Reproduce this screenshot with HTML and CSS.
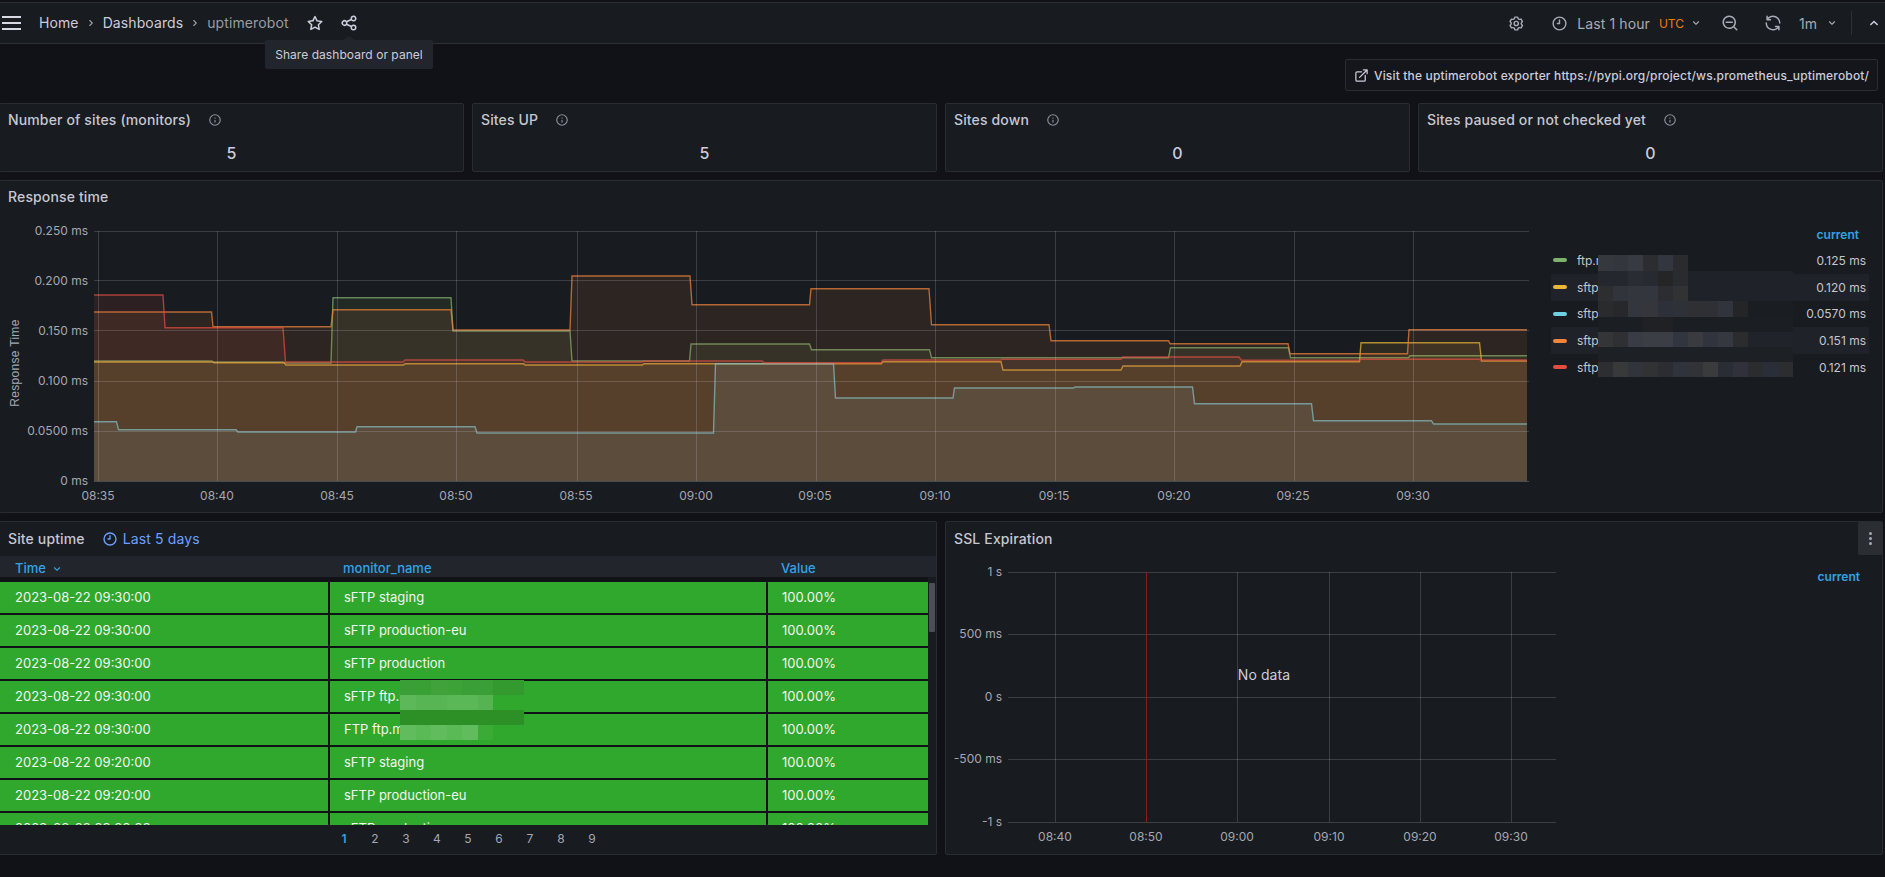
FILE: index.html
```html
<!DOCTYPE html>
<html lang="en">
<head>
<meta charset="utf-8">
<title>uptimerobot - Dashboards</title>
<link rel="stylesheet" href="styles.css">
</head>
<body>
<svg class="sprite" width="0" height="0" aria-hidden="true">
  <symbol id="i-star" viewBox="0 0 24 24"><path d="M22,9.67A1,1,0,0,0,21.14,9l-5.69-.83L12.9,3a1,1,0,0,0-1.8,0L8.55,8.16,2.86,9a1,1,0,0,0-.81.68,1,1,0,0,0,.25,1L6.43,14.7l-1,5.68A1,1,0,0,0,6.9,21.44L12,18.77l5.1,2.67a.93.93,0,0,0,.46.12,1,1,0,0,0,.59-.19,1,1,0,0,0,.4-1l-1-5.68,4.13-4A1,1,0,0,0,22,9.67Zm-6.15,4a1,1,0,0,0-.29.88l.72,4.2-3.76-2a1.06,1.06,0,0,0-.94,0l-3.76,2,.72-4.2a1,1,0,0,0-.29-.88l-3-3,4.21-.61a1,1,0,0,0,.76-.55L12,5.7l1.88,3.82a1,1,0,0,0,.76.55l4.21.61Z"/></symbol>
  <symbol id="i-share" viewBox="0 0 24 24"><path d="M18,14a4,4,0,0,0-3.08,1.48l-5.1-2.35a3.64,3.64,0,0,0,0-2.26l5.1-2.35A4,4,0,1,0,14,6a4.17,4.17,0,0,0,.07.71L8.79,9.14a4,4,0,1,0,0,5.72l5.28,2.43A4.17,4.17,0,0,0,14,18a4,4,0,1,0,4-4ZM18,4a2,2,0,1,1-2,2A2,2,0,0,1,18,4ZM6,14a2,2,0,1,1,2-2A2,2,0,0,1,6,14Zm12,6a2,2,0,1,1,2-2A2,2,0,0,1,18,20Z"/></symbol>
  <symbol id="i-clock" viewBox="0 0 24 24"><path d="M12,2A10,10,0,1,0,22,12,10,10,0,0,0,12,2Zm0,18a8,8,0,1,1,8-8A8,8,0,0,1,12,20ZM12,6a1,1,0,0,0-1,1v4H9a1,1,0,0,0,0,2h3a1,1,0,0,0,1-1V7A1,1,0,0,0,12,6Z"/></symbol>
  <symbol id="i-info" viewBox="0 0 24 24"><path d="M12,2A10,10,0,1,0,22,12,10,10,0,0,0,12,2Zm0,18a8,8,0,1,1,8-8A8,8,0,0,1,12,20Zm0-8.5a1,1,0,0,0-1,1v3a1,1,0,0,0,2,0v-3A1,1,0,0,0,12,11.5Zm0-4a1.25,1.25,0,1,0,1.25,1.25A1.25,1.25,0,0,0,12,7.5Z"/></symbol>
  <symbol id="i-cog" viewBox="0 0 24 24"><path d="M19.9,12.66a1,1,0,0,1,0-1.32L21.18,9.9a1,1,0,0,0,.12-1.17l-2-3.46a1,1,0,0,0-1.07-.48l-1.88.38a1,1,0,0,1-1.15-.66l-.61-1.83A1,1,0,0,0,13.64,2h-4a1,1,0,0,0-1,.68L8.08,4.51a1,1,0,0,1-1.15.66L5,4.79A1,1,0,0,0,4,5.27L2,8.73A1,1,0,0,0,2.1,9.9l1.27,1.44a1,1,0,0,1,0,1.32L2.1,14.1A1,1,0,0,0,2,15.27l2,3.46a1,1,0,0,0,1.07.48l1.88-.38a1,1,0,0,1,1.15.66l.61,1.83a1,1,0,0,0,1,.68h4a1,1,0,0,0,.95-.68l.61-1.83a1,1,0,0,1,1.15-.66l1.88.38a1,1,0,0,0,1.07-.48l2-3.46a1,1,0,0,0-.12-1.17ZM18.41,14l.8.9-1.28,2.22-1.18-.24a3,3,0,0,0-3.45,2L12.92,20H10.36L10,18.86a3,3,0,0,0-3.45-2l-1.18.24L4.07,14.89l.8-.9a3,3,0,0,0,0-4l-.8-.9L5.35,6.89l1.18.24a3,3,0,0,0,3.45-2L10.36,4h2.56l.38,1.14a3,3,0,0,0,3.45,2l1.18-.24,1.28,2.22-.8.9A3,3,0,0,0,18.41,14ZM11.64,8a4,4,0,1,0,4,4A4,4,0,0,0,11.64,8Zm0,6a2,2,0,1,1,2-2A2,2,0,0,1,11.64,14Z"/></symbol>
  <symbol id="i-zoom" viewBox="0 0 24 24"><path d="M21.71,20.29,18,16.61A9,9,0,1,0,16.61,18l3.68,3.68a1,1,0,0,0,1.42,0A1,1,0,0,0,21.71,20.29ZM11,18a7,7,0,1,1,7-7A7,7,0,0,1,11,18Zm4-8H7a1,1,0,0,0,0,2h8a1,1,0,0,0,0-2Z"/></symbol>
  <symbol id="i-sync" viewBox="0 0 24 24"><path d="M19.91,15.51H15.38a1,1,0,0,0,0,2h2.4A8,8,0,0,1,4,12a1,1,0,0,0-2,0,10,10,0,0,0,16.88,7.23V21a1,1,0,0,0,2,0V16.5A1,1,0,0,0,19.91,15.51ZM12,2A10,10,0,0,0,5.12,4.77V3a1,1,0,0,0-2,0V7.5a1,1,0,0,0,1,1h4.5a1,1,0,0,0,0-2H6.22A8,8,0,0,1,20,12a1,1,0,0,0,2,0A10,10,0,0,0,12,2Z"/></symbol>
  <symbol id="i-ext" viewBox="0 0 24 24"><path d="M18,10.82a1,1,0,0,0-1,1V19a1,1,0,0,1-1,1H5a1,1,0,0,1-1-1V8A1,1,0,0,1,5,7h7.18a1,1,0,0,0,0-2H5A3,3,0,0,0,2,8V19a3,3,0,0,0,3,3H16a3,3,0,0,0,3-3V11.82A1,1,0,0,0,18,10.82Zm3.92-8.2a1,1,0,0,0-.54-.54A1,1,0,0,0,21,2H15a1,1,0,0,0,0,2h3.59L8.29,14.29a1,1,0,0,0,0,1.42,1,1,0,0,0,1.42,0L20,5.41V9a1,1,0,0,0,2,0V3A1,1,0,0,0,21.92,2.62Z"/></symbol>
  <symbol id="i-down" viewBox="0 0 24 24"><path d="M17,9.17a1,1,0,0,0-1.41,0L12,12.71,8.46,9.17a1,1,0,0,0-1.41,0,1,1,0,0,0,0,1.42l4.24,4.24a1,1,0,0,0,1.42,0L17,10.59A1,1,0,0,0,17,9.17Z"/></symbol>
  <symbol id="i-up" viewBox="0 0 24 24"><path d="M17,13.41,12.71,9.17a1,1,0,0,0-1.42,0L7.05,13.41a1,1,0,0,0,0,1.42,1,1,0,0,0,1.41,0L12,11.29l3.54,3.54a1,1,0,0,0,.7.29,1,1,0,0,0,.71-.29A1,1,0,0,0,17,13.41Z"/></symbol>
  <symbol id="i-right" viewBox="0 0 24 24"><path d="M14.83,11.29,10.59,7.05a1,1,0,0,0-1.42,0,1,1,0,0,0,0,1.41L12.71,12,9.17,15.54a1,1,0,0,0,0,1.41,1,1,0,0,0,.71.29,1,1,0,0,0,.71-.29l4.24-4.24A1,1,0,0,0,14.83,11.29Z"/></symbol>
</svg>

<header class="topbar">
  <nav class="crumbs">
    <span class="burger"><i></i><i></i><i></i></span>
    <a class="crumb home">Home</a>
    <svg class="ic sep"><use href="#i-right"/></svg>
    <a class="crumb">Dashboards</a>
    <svg class="ic sep"><use href="#i-right"/></svg>
    <span class="crumb current-page">uptimerobot</span>
    <svg class="ic star"><use href="#i-star"/></svg>
    <svg class="ic share"><use href="#i-share"/></svg>
  </nav>
  <div class="tools">
    <svg class="ic cog"><use href="#i-cog"/></svg>
    <svg class="ic clock"><use href="#i-clock"/></svg>
    <span class="range">Last 1 hour</span>
    <span class="utc">UTC</span>
    <svg class="ic chev"><use href="#i-down"/></svg>
    <svg class="ic zoomout"><use href="#i-zoom"/></svg>
    <svg class="ic sync"><use href="#i-sync"/></svg>
    <span class="interval">1m</span>
    <svg class="ic chev chev-2"><use href="#i-down"/></svg>
    <span class="divider"></span>
    <svg class="ic chev-up"><use href="#i-up"/></svg>
  </div>
  <div class="tooltip">Share dashboard or panel</div>
</header>

<main class="dash">
  <div class="link-row">
    <a class="link-btn"><svg class="ic ext"><use href="#i-ext"/></svg>Visit the uptimerobot exporter https://pypi.org/project/ws.prometheus_uptimerobot/</a>
  </div>

  <section class="stats">
    <article class="panel stat">
      <h2 class="title">Number of sites (monitors)<svg class="ic info"><use href="#i-info"/></svg></h2>
      <p class="value">5</p>
    </article>
    <article class="panel stat">
      <h2 class="title">Sites UP<svg class="ic info"><use href="#i-info"/></svg></h2>
      <p class="value">5</p>
    </article>
    <article class="panel stat">
      <h2 class="title">Sites down<svg class="ic info"><use href="#i-info"/></svg></h2>
      <p class="value">0</p>
    </article>
    <article class="panel stat">
      <h2 class="title">Sites paused or not checked yet<svg class="ic info"><use href="#i-info"/></svg></h2>
      <p class="value">0</p>
    </article>
  </section>

  <article class="panel response">
    <h2 class="title title-chart">Response time</h2>
    <div class="chart-row">
      <svg class="plot plot-response" viewBox="0 210 1544 300" width="1544" height="300">
        <g class="series">
          <path class="fill green" d="M94,360 H212 L213,361 H283 L285,362 H331 L333,296.7 H451 L453,330 H570 L572,360 H689.5 L691,343 H809.5 L811.5,348.7 H929.5 L931.5,356.7 H1168.5 L1170.5,346.7 H1288.5 L1290.5,356.7 H1408.5 L1410,354.7 H1527 V480 H94 Z"/>
          <path class="line green" d="M94,360 H212 L213,361 H283 L285,362 H331 L333,296.7 H451 L453,330 H570 L572,360 H689.5 L691,343 H809.5 L811.5,348.7 H929.5 L931.5,356.7 H1168.5 L1170.5,346.7 H1288.5 L1290.5,356.7 H1408.5 L1410,354.7 H1527"/>
          <path class="fill yellow" d="M94,361 H212.5 L214,361.7 H284 L286,364 H403.5 L405,362.7 H523.5 L525,364 H642.5 L644,362.7 H881.5 L883,360.7 H1001 L1003,369 H1121 L1123,365 H1240 L1242,360.7 H1359.5 L1361,341.7 H1479.5 L1481.5,360 H1527 V480 H94 Z"/>
          <path class="line yellow" d="M94,361 H212.5 L214,361.7 H284 L286,364 H403.5 L405,362.7 H523.5 L525,364 H642.5 L644,362.7 H881.5 L883,360.7 H1001 L1003,369 H1121 L1123,365 H1240 L1242,360.7 H1359.5 L1361,341.7 H1479.5 L1481.5,360 H1527"/>
          <path class="fill cyan" d="M94,420.7 H116.5 L118.5,428.7 H236 L238,431 H355.5 L357,425.7 H475 L477,432 H713.5 L715.5,362.7 H833.5 L835.5,397 H953 L954.5,387 H1073.5 L1075,386 H1192.5 L1194.5,402.7 H1311.5 L1313.5,419.7 H1431.5 L1433.5,423 H1527 V480 H94 Z"/>
          <path class="line cyan" d="M94,420.7 H116.5 L118.5,428.7 H236 L238,431 H355.5 L357,425.7 H475 L477,432 H713.5 L715.5,362.7 H833.5 L835.5,397 H953 L954.5,387 H1073.5 L1075,386 H1192.5 L1194.5,402.7 H1311.5 L1313.5,419.7 H1431.5 L1433.5,423 H1527"/>
          <path class="fill orange" d="M94,311 H211.5 L213,325.7 H331 L333,308.7 H451 L453,329 H570 L572,275 H690 L692,303.7 H809.5 L811,287.7 H929 L931.5,323.7 H1049 L1051,339.7 H1168.5 L1170,342.7 H1288 L1290,352.7 H1407.5 L1409,328.7 H1527 V480 H94 Z"/>
          <path class="line orange" d="M94,311 H211.5 L213,325.7 H331 L333,308.7 H451 L453,329 H570 L572,275 H690 L692,303.7 H809.5 L811,287.7 H929 L931.5,323.7 H1049 L1051,339.7 H1168.5 L1170,342.7 H1288 L1290,352.7 H1407.5 L1409,328.7 H1527"/>
          <path class="fill red" d="M94,294 H163 L165,326.7 H283 L285.5,361 H403 L405,359 H523 L525,361 H642 L644,360 H762 L764,361.7 H881 L883,359 H1000.5 L1002.5,358.3 H1121 L1122.5,356 H1239 L1241.5,359.3 H1359 L1361,358.3 H1479 L1481,359 H1527 V480 H94 Z"/>
          <path class="line red" d="M94,294 H163 L165,326.7 H283 L285.5,361 H403 L405,359 H523 L525,361 H642 L644,360 H762 L764,361.7 H881 L883,359 H1000.5 L1002.5,358.3 H1121 L1122.5,356 H1239 L1241.5,359.3 H1359 L1361,358.3 H1479 L1481,359 H1527"/>
        </g>
        <g class="grid">
          <path d="M94,230.5H1529M94,279.5H1529M94,329.5H1529M94,380.5H1529M94,430.5H1529"/>
          <path d="M98.5,230V480M217.5,230V480M337.5,230V480M456.5,230V480M577.5,230V480M696.5,230V480M816.5,230V480M935.5,230V480M1055.5,230V480M1174.5,230V480M1294.5,230V480M1413.5,230V480"/>
          <path class="axis" d="M94,480.5H1529"/>
        </g>
        <g class="ticks ticks-y">
          <text x="88" y="234">0.250 ms</text>
          <text x="88" y="284">0.200 ms</text>
          <text x="88" y="334">0.150 ms</text>
          <text x="88" y="384">0.100 ms</text>
          <text x="88" y="434">0.0500 ms</text>
          <text x="88" y="484">0 ms</text>
        </g>
        <g class="ticks ticks-x">
          <text x="98" y="499">08:35</text>
          <text x="217" y="499">08:40</text>
          <text x="337" y="499">08:45</text>
          <text x="456" y="499">08:50</text>
          <text x="576" y="499">08:55</text>
          <text x="696" y="499">09:00</text>
          <text x="815" y="499">09:05</text>
          <text x="935" y="499">09:10</text>
          <text x="1054" y="499">09:15</text>
          <text x="1174" y="499">09:20</text>
          <text x="1293" y="499">09:25</text>
          <text x="1413" y="499">09:30</text>
        </g>
        <text class="axis-label" transform="translate(19 362) rotate(-90)">Response Time</text>
      </svg>
      <div class="legend">
        <div class="legend-head">current</div>
        <div class="legend-row"><i class="sw sw-green"></i><span class="lname">ftp.m</span><span class="lval">0.125 ms</span></div>
        <div class="legend-row alt"><i class="sw sw-yellow"></i><span class="lname">sftp.m</span><span class="lval">0.120 ms</span></div>
        <div class="legend-row"><i class="sw sw-cyan"></i><span class="lname">sftp.m</span><span class="lval">0.0570 ms</span></div>
        <div class="legend-row alt"><i class="sw sw-orange"></i><span class="lname">sftp.m</span><span class="lval">0.151 ms</span></div>
        <div class="legend-row"><i class="sw sw-red"></i><span class="lname">sftp.m</span><span class="lval">0.121 ms</span></div>
        <svg class="mask mask-legend" width="195" height="122" viewBox="0 0 195 122" shape-rendering="crispEdges">
          <g>
            <rect x="0" y="0" width="15" height="16" fill="#35383c"/><rect x="15" y="0" width="15" height="16" fill="#33363d"/><rect x="30" y="0" width="15" height="16" fill="#373a40"/><rect x="45" y="0" width="15" height="16" fill="#2c2d30"/><rect x="60" y="0" width="15" height="16" fill="#33363f"/><rect x="75" y="0" width="15" height="16" fill="#2a2b2e"/>
            <rect x="0" y="16" width="195" height="15" fill="#1f2229"/><rect x="0" y="16" width="30" height="15" fill="#24272e"/><rect x="30" y="16" width="15" height="15" fill="#2a2c34"/><rect x="45" y="16" width="15" height="15" fill="#272a30"/><rect x="60" y="16" width="15" height="15" fill="#252527"/><rect x="75" y="16" width="15" height="15" fill="#2a2b2e"/>
            <rect x="0" y="31" width="195" height="15" fill="#1f2229"/><rect x="0" y="31" width="15" height="15" fill="#2d2e30"/><rect x="15" y="31" width="15" height="15" fill="#31343b"/><rect x="30" y="31" width="30" height="15" fill="#33363d"/><rect x="60" y="31" width="15" height="15" fill="#2b2d33"/><rect x="75" y="31" width="15" height="15" fill="#313233"/>
            <rect x="0" y="46" width="195" height="16" fill="#1a1d21"/><rect x="0" y="46" width="15" height="16" fill="#2a2b2d"/><rect x="15" y="46" width="15" height="16" fill="#26282c"/><rect x="30" y="46" width="15" height="16" fill="#33363c"/><rect x="45" y="46" width="15" height="16" fill="#35363b"/><rect x="60" y="46" width="15" height="16" fill="#2d3038"/><rect x="75" y="46" width="15" height="16" fill="#2e3138"/><rect x="90" y="46" width="15" height="16" fill="#2f3034"/><rect x="105" y="46" width="15" height="16" fill="#2e3035"/><rect x="120" y="46" width="15" height="16" fill="#31343b"/><rect x="135" y="46" width="15" height="16" fill="#232527"/>
            <rect x="0" y="62" width="195" height="15" fill="#1b1e22"/><rect x="45" y="62" width="30" height="15" fill="#1f2124"/>
            <rect x="0" y="77" width="195" height="15" fill="#20232a"/><rect x="0" y="77" width="15" height="15" fill="#343537"/><rect x="15" y="77" width="15" height="15" fill="#2e3034"/><rect x="30" y="77" width="15" height="15" fill="#3a3c45"/><rect x="45" y="77" width="30" height="15" fill="#3c3e46"/><rect x="75" y="77" width="15" height="15" fill="#31353f"/><rect x="90" y="77" width="15" height="15" fill="#3a3b3e"/><rect x="105" y="77" width="15" height="15" fill="#31343d"/><rect x="120" y="77" width="15" height="15" fill="#35383e"/><rect x="135" y="77" width="15" height="15" fill="#2b2c2e"/>
            <rect x="0" y="92" width="195" height="15" fill="#1d2024"/>
            <rect x="0" y="107" width="15" height="15" fill="#2d2e31"/><rect x="15" y="107" width="15" height="15" fill="#38393b"/><rect x="30" y="107" width="15" height="15" fill="#31343a"/><rect x="45" y="107" width="15" height="15" fill="#313234"/><rect x="60" y="107" width="15" height="15" fill="#2b2d33"/><rect x="75" y="107" width="15" height="15" fill="#2f333c"/><rect x="90" y="107" width="15" height="15" fill="#323336"/><rect x="105" y="107" width="15" height="15" fill="#3a3b3d"/><rect x="120" y="107" width="15" height="15" fill="#2a2d35"/><rect x="135" y="107" width="15" height="15" fill="#30313a"/><rect x="150" y="107" width="15" height="15" fill="#2b2c2e"/><rect x="165" y="107" width="15" height="15" fill="#2a2e38"/><rect x="180" y="107" width="15" height="15" fill="#2c2d2f"/>
          </g>
        </svg>
      </div>
    </div>
  </article>

  <section class="bottom">
    <article class="panel uptime">
      <h2 class="title title-bottom">Site uptime<span class="override"><svg class="ic override-ic"><use href="#i-clock"/></svg>Last 5 days</span></h2>
      <div class="thead">
        <span class="th th-time">Time<svg class="ic th-chev"><use href="#i-down"/></svg></span>
        <span class="th">monitor_name</span>
        <span class="th">Value</span>
      </div>
      <div class="tbody-wrap">
        <div class="tbody">
          <div class="cell">2023-08-22 09:30:00</div><div class="cell">sFTP staging</div><div class="cell">100.00%</div>
          <div class="cell">2023-08-22 09:30:00</div><div class="cell">sFTP production-eu</div><div class="cell">100.00%</div>
          <div class="cell">2023-08-22 09:30:00</div><div class="cell">sFTP production</div><div class="cell">100.00%</div>
          <div class="cell">2023-08-22 09:30:00</div><div class="cell">sFTP ftp.m</div><div class="cell">100.00%</div>
          <div class="cell">2023-08-22 09:30:00</div><div class="cell">FTP ftp.m</div><div class="cell">100.00%</div>
          <div class="cell">2023-08-22 09:20:00</div><div class="cell">sFTP staging</div><div class="cell">100.00%</div>
          <div class="cell">2023-08-22 09:20:00</div><div class="cell">sFTP production-eu</div><div class="cell">100.00%</div>
          <div class="cell cell-cut">2023-08-22 09:20:00</div><div class="cell cell-cut">sFTP production</div><div class="cell cell-cut">100.00%</div>
        </div>
        <svg class="mask mask-table" width="124" height="60" viewBox="0 0 124 60" shape-rendering="crispEdges">
          <rect x="0" y="0" width="16" height="15" fill="#3a9f36"/><rect x="16" y="0" width="15" height="15" fill="#38a034"/><rect x="31" y="0" width="16" height="15" fill="#3fa23b"/><rect x="47" y="0" width="15" height="15" fill="#3da339"/><rect x="62" y="0" width="31" height="15" fill="#3b9f37"/><rect x="93" y="0" width="31" height="15" fill="#329a2e"/>
          <rect x="0" y="15" width="124" height="15" fill="#30a82d"/><rect x="0" y="15" width="16" height="15" fill="#5db859"/><rect x="16" y="15" width="31" height="15" fill="#57b553"/><rect x="47" y="15" width="31" height="15" fill="#5bb857"/><rect x="78" y="15" width="15" height="15" fill="#55b451"/>
          <rect x="0" y="30" width="124" height="15" fill="#2c9027"/>
          <rect x="0" y="45" width="124" height="15" fill="#30a82d"/><rect x="0" y="45" width="16" height="15" fill="#60bc5c"/><rect x="16" y="45" width="15" height="15" fill="#5aba56"/><rect x="31" y="45" width="16" height="15" fill="#60bc5c"/><rect x="47" y="45" width="15" height="15" fill="#5aba56"/><rect x="62" y="45" width="16" height="15" fill="#60bc5c"/><rect x="78" y="45" width="15" height="15" fill="#3aab36"/>
        </svg>
        <span class="scrollthumb"></span>
      </div>
      <div class="pager">
        <span class="page on">1</span><span class="page">2</span><span class="page">3</span><span class="page">4</span><span class="page">5</span><span class="page">6</span><span class="page">7</span><span class="page">8</span><span class="page">9</span>
      </div>
    </article>

    <article class="panel ssl">
      <h2 class="title title-bottom">SSL Expiration</h2>
      <span class="panel-menu"><i></i><i></i><i></i></span>
      <div class="chart-row">
        <svg class="plot" viewBox="946 555 620 298" width="620" height="298">
          <g class="grid">
            <path d="M1008,572.5H1556M1008,634.5H1556M1008,697.5H1556M1008,759.5H1556M1008,822.5H1556"/>
            <path d="M1055.5,572V822M1237.5,572V822M1329.5,572V822M1420.5,572V822M1511.5,572V822"/>
            <path class="marker" d="M1146.5,572V822"/>
          </g>
          <g class="ticks ticks-y">
            <text x="1002" y="576">1 s</text>
            <text x="1002" y="638">500 ms</text>
            <text x="1002" y="701">0 s</text>
            <text x="1002" y="763">-500 ms</text>
            <text x="1002" y="826">-1 s</text>
          </g>
          <g class="ticks ticks-x">
            <text x="1055" y="841">08:40</text>
            <text x="1146" y="841">08:50</text>
            <text x="1237" y="841">09:00</text>
            <text x="1329" y="841">09:10</text>
            <text x="1420" y="841">09:20</text>
            <text x="1511" y="841">09:30</text>
          </g>
          <text class="nodata" x="1264" y="680">No data</text>
        </svg>
        <div class="legend legend-empty"><div class="legend-head">current</div></div>
      </div>
    </article>
  </section>
</main>
</body>
</html>
```

FILE: styles.css
```css
* { box-sizing: border-box; }
html, body { margin: 0; padding: 0; height: 100%; }
body {
  background: #111217;
  color: #ccccdc;
  font-family: Inter, "Noto Sans", "Liberation Sans", sans-serif;
  font-size: 14px;
  overflow: hidden;
}
.sprite { position: absolute; }
.ic { fill: currentColor; display: block; flex: none; width: 16px; height: 16px; }

/* top bar */
.topbar {
  position: relative;
  display: flex;
  justify-content: space-between;
  align-items: center;
  height: 42px;
  margin-top: 2px;
  background: #181b1f;
  border-top: 1px solid #2d2f34;
  border-bottom: 1px solid #2d2f34;
}
.crumbs, .tools { display: flex; align-items: center; }
.burger { display: flex; flex-direction: column; gap: 4px; width: 19px; margin-left: 2px; }
.burger i { display: block; height: 2px; background: #d8d9e2; }
.crumb { font-size: 14px; line-height: 20px; color: #ccccdc; letter-spacing: .1px; white-space: nowrap; }
.home { margin-left: 18px; }
.sep { width: 14px; height: 14px; margin: 0 5px; color: #9a9ba6; }
.current-page { color: #9a9ba6; }
.star { width: 18px; height: 18px; margin-left: 17px; color: #ccccdc; }
.share { width: 18px; height: 18px; margin-left: 16px; color: #ccccdc; }
.tools { color: #a9aab5; }
.cog { width: 17px; height: 17px; }
.clock { width: 17px; height: 17px; margin-left: 26px; }
.range { margin-left: 9.5px; font-size: 14px; letter-spacing: .1px; color: #a9aab5; }
.utc { margin-left: 9px; font-size: 12px; font-weight: 400; color: #ef7a10; }
.chev { width: 14px; height: 14px; margin-left: 5px; }
.zoomout { width: 18px; height: 18px; margin-left: 18px; }
.sync { width: 18px; height: 18px; margin-left: 25px; }
.interval { margin-left: 17px; font-size: 14px; }
.chev-2 { margin-left: 8px; }
.divider { width: 1px; height: 24px; background: #2d2f34; margin-left: 12px; }
.chev-up { width: 18px; height: 18px; margin-left: 13px; margin-right: 2px; color: #ccccdc; }
.tooltip {
  position: absolute;
  left: 265px;
  top: 37px;
  width: 168px;
  height: 29px;
  background: #22252b;
  border-radius: 2px;
  font-size: 12px;
  line-height: 29px;
  text-align: center;
  letter-spacing: .05px;
  color: #ccccdc;
  z-index: 5;
}
.tooltip::before {
  content: "";
  position: absolute;
  left: 78px;
  top: -4px;
  border: 6px solid transparent;
  border-top: 0;
  border-bottom: 4px solid #22252b;
}

/* dashboard */
.dash { margin-left: -1px; width: 1884px; padding-top: 15px; }
.link-row { display: flex; justify-content: flex-end; padding-right: 5px; }
.link-btn {
  display: flex;
  align-items: center;
  gap: 5px;
  width: 533px;
  height: 32px;
  padding-left: 8px;
  font-size: 12px;
  font-weight: 500;
  letter-spacing: .17px;
  color: #ccccdc;
  background: #14161b;
  border: 1px solid #2a2c31;
  border-radius: 2px;
  white-space: nowrap;
}
.ext { width: 15px; height: 15px; }
.panel {
  position: relative;
  background: #181b1f;
  border: 1px solid #2a2c31;
  border-radius: 2px;
}
.title {
  display: flex;
  align-items: center;
  margin: 0;
  font-size: 14px;
  font-weight: 500;
  line-height: 20px;
  letter-spacing: .14px;
  color: #c6c7d3;
  padding-left: 8px;
  white-space: nowrap;
}
.stats {
  display: grid;
  grid-template-columns: repeat(4, 1fr);
  gap: 8px;
  margin-top: 12px;
}
.stat { height: 69px; padding-top: 6px; }
.info { width: 14px; height: 14px; margin-left: 17px; color: #8e8f9a; }
.value { margin: 13px 0 0; text-align: center; font-size: 16px; font-weight: 500; line-height: 20px; color: #ccccdc; }

.response { height: 333px; margin-top: 8px; }
.title-chart { height: 30px; padding-top: 6px; align-items: flex-start; }
.chart-row { display: flex; }
.plot { display: block; flex: none; }
.ticks text { font-family: Inter, "Noto Sans", sans-serif; font-size: 12px; fill: #a6a7b2; }
.ticks-y text { text-anchor: end; }
.ticks-x text { text-anchor: middle; }
.axis-label { font-family: "Liberation Sans", Arial, sans-serif; font-size: 12px; fill: #a6a7b2; text-anchor: middle; letter-spacing: .3px; }
.grid path { fill: none; stroke: rgba(204, 204, 220, .2); stroke-width: 1; }
.grid .axis { stroke: rgba(204, 204, 220, .28); }
.grid .marker { stroke: #8a1c20; }
.nodata { font-family: Inter, sans-serif; font-size: 14px; fill: #ccccdc; text-anchor: middle; letter-spacing: .1px; }
.fill { stroke: none; fill-opacity: .1; }
.line { fill: none; stroke-width: 1.4; stroke-opacity: .72; }
.fill.green { fill: #7eb26d; } .line.green { stroke: #7eb26d; }
.fill.yellow { fill: #eab839; } .line.yellow { stroke: #eab839; }
.fill.cyan { fill: #6ed0e0; } .line.cyan { stroke: #6ed0e0; }
.fill.orange { fill: #ef843c; } .line.orange { stroke: #ef843c; }
.fill.red { fill: #e24d42; } .line.red { stroke: #e24d42; }

/* legend */
.legend { position: relative; flex: none; width: 318px; margin-left: 7px; padding-top: 14px; font-size: 12px; }
.legend-head { height: 22px; line-height: 20px; text-align: right; padding-right: 10px; font-weight: 600; color: #33a2e5; }
.legend-row { display: flex; align-items: center; height: 26.75px; padding-right: 3px; color: #c4c5d1; white-space: nowrap; }
.legend-row.alt { background: #1f2229; }
.sw { display: block; width: 14px; height: 4px; border-radius: 2px; margin-left: 2px; }
.sw-green { background: #7eb26d; }
.sw-yellow { background: #eab839; }
.sw-cyan { background: #6ed0e0; }
.sw-orange { background: #ef843c; }
.sw-red { background: #e24d42; }
.lname { margin-left: 10px; }
.lval { margin-left: auto; }
.mask { position: absolute; display: block; }
.mask-legend { left: 47px; top: 44px; }

/* bottom row */
.bottom { display: grid; grid-template-columns: repeat(2, 1fr); gap: 8px; margin-top: 8px; }
.uptime, .ssl { height: 334px; }
.title-bottom { height: 33px; padding-top: 0; }
.override { display: flex; align-items: center; margin-left: 17px; font-weight: 400; color: #6e9fff; }
.override-ic { width: 16px; height: 16px; margin-right: 5px; }
.thead {
  display: grid;
  grid-template-columns: 330px 438px 160px;
  height: 21px;
  margin-top: 1px;
  background: #22252b;
  font-size: 12px;
  line-height: 21px;
}
.th { display: flex; align-items: center; padding: 2px 0 0 13px; font-weight: 500; color: #33a2e5; font-size: 13px; }
.th-time { padding-left: 15px; }
.th-chev { width: 14px; height: 14px; margin-left: 4px; }
.tbody-wrap { position: relative; height: 248px; overflow: hidden; }
.tbody {
  display: grid;
  grid-template-columns: 328px 436px 160px;
  gap: 2px;
  width: 928px;
  height: 248px;
  padding-top: 5px;
  background: #111217;
  overflow: hidden;
}
.cell {
  height: 31px;
  padding-left: 14px;
  line-height: 31px;
  font-size: 13px;
  color: #f3f6f2;
  background: #30a82d;
  white-space: nowrap;
}
.cell:nth-child(3n+1) { padding-left: 15px; }
.cell-cut { height: 12px; overflow: hidden; }
.mask-table { left: 400px; top: 103px; }
.scrollthumb { position: absolute; left: 929px; top: 6px; width: 6px; height: 49px; background: #4b4e54; border-radius: 1px; }
.pager { display: flex; justify-content: center; height: 24px; padding-top: 4px; font-size: 12px; line-height: 20px; }
.page { width: 31px; text-align: center; color: #a6a7b2; }
.page.on { color: #33a2e5; font-weight: 600; }

.panel-menu {
  position: absolute;
  right: -1px;
  top: 0;
  width: 25px;
  height: 33px;
  background: #2a2d31;
  border-radius: 2px;
  display: flex;
  flex-direction: column;
  align-items: center;
  justify-content: center;
  gap: 2px;
}
.panel-menu i { display: block; width: 3px; height: 3px; border-radius: 50%; background: #a6a7b2; }
.ssl .title-bottom { padding-left: 8px; }
.ssl .legend { width: 316px; margin-left: 0; padding-top: 12px; }
.ssl .legend-head { padding-right: 22px; }
```
